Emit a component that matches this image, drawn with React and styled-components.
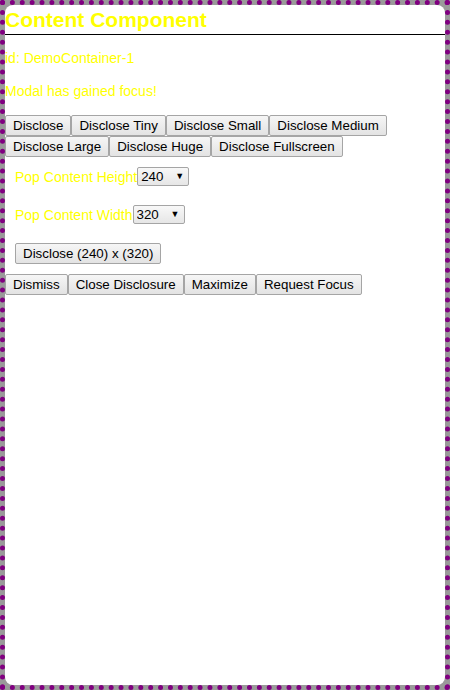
import React, { useState } from 'react';
import styled, { createGlobalStyle } from 'styled-components';

const GlobalStyle = createGlobalStyle`
  html, body {
    margin: 0;
    padding: 0;
    background: #999999;
  }
  body {
    font-family: "Liberation Sans", Arial, sans-serif;
  }
`;

const Frame = styled.div`
  box-sizing: border-box;
  width: 450px;
  height: 690px;
  background: #9a9a9a;
  border: 5px dotted #800080;
`;

const Panel = styled.div`
  height: 100%;
  background: #ffffff;
  border-radius: 8px;
  overflow: hidden;
  display: flex;
  flex-direction: column;
`;

const Title = styled.h1`
  margin: 0;
  padding: 3px 0 2px;
  font-size: 21px;
  line-height: 24px;
  font-weight: bold;
  color: #ffff00;
  border-bottom: 1px solid #000000;
`;

const Messages = styled.div`
  display: flex;
  flex-direction: column;
  gap: 17px;
  padding: 15px 0 16px;
`;

const Message = styled.p`
  margin: 0;
  font-size: 14px;
  line-height: 16px;
  color: #ffff00;
`;

const ButtonBar = styled.div`
  display: flex;
  flex-wrap: wrap;
`;

const Button = styled.button`
  box-sizing: border-box;
  height: 21px;
  margin: 0;
  padding: 1px 7px;
  font-family: "Liberation Sans", Arial, sans-serif;
  font-size: 13.33px;
  color: #000000;
  background: linear-gradient(#f6f6f6, #e3e3e3);
  border: 1px solid #a5a5a5;
  border-radius: 2px;
  white-space: nowrap;
  cursor: pointer;
`;

const Form = styled.div`
  display: flex;
  flex-direction: column;
  align-items: flex-start;
  gap: 19px;
  padding: 10px;
`;

const Field = styled.label`
  display: flex;
  align-items: center;
  font-size: 14px;
  line-height: 16px;
  color: #ffff00;
`;

const SelectWrap = styled.span`
  position: relative;
  display: inline-flex;
`;

const Select = styled.select`
  appearance: none;
  box-sizing: border-box;
  width: 52px;
  height: 19px;
  margin: 0;
  padding: 0 0 0 3px;
  font-family: "Liberation Sans", Arial, sans-serif;
  font-size: 13.33px;
  color: #000000;
  background: linear-gradient(#f8f8f8, #e6e6e6);
  border: 1px solid #a5a5a5;
  border-radius: 2px;
`;

const Arrow = styled.span`
  position: absolute;
  right: 5px;
  top: 3px;
  font-size: 9px;
  line-height: 12px;
  color: #000000;
  pointer-events: none;
`;

const sizes = ['120', '160', '200', '240', '280', '320', '360', '400', '480'];

const SizeField = ({ label, value, onChange }) => (
  <Field>
    {label}
    <SelectWrap>
      <Select value={value} onChange={e => onChange(e.target.value)}>
        {sizes.map(s => (
          <option key={s} value={s}>{s}</option>
        ))}
      </Select>
      <Arrow>▼</Arrow>
    </SelectWrap>
  </Field>
);

const App = () => {
  const [height, setHeight] = useState('240');
  const [width, setWidth] = useState('320');

  const discloseButtons = ['Disclose', 'Disclose Tiny', 'Disclose Small', 'Disclose Medium',
    'Disclose Large', 'Disclose Huge', 'Disclose Fullscreen'];
  const actionButtons = ['Dismiss', 'Close Disclosure', 'Maximize', 'Request Focus'];

  return (
    <>
      <GlobalStyle />
      <Frame>
        <Panel>
          <Title>Content Component</Title>
          <Messages>
            <Message>id: DemoContainer-1</Message>
            <Message>Modal has gained focus!</Message>
          </Messages>
          <ButtonBar>
            {discloseButtons.map(label => (
              <Button key={label}>{label}</Button>
            ))}
          </ButtonBar>
          <Form>
            <SizeField label="Pop Content Height" value={height} onChange={setHeight} />
            <SizeField label="Pop Content Width" value={width} onChange={setWidth} />
            <Button>Disclose ({height}) x ({width})</Button>
          </Form>
          <ButtonBar>
            {actionButtons.map(label => (
              <Button key={label}>{label}</Button>
            ))}
          </ButtonBar>
        </Panel>
      </Frame>
    </>
  );
};

export default App;
